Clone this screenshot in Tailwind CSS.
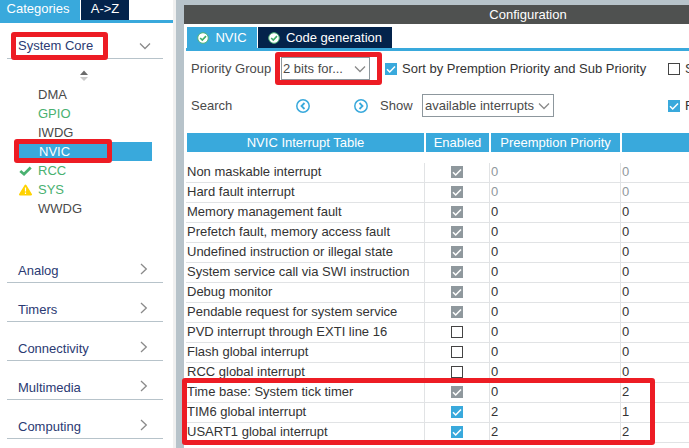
<!DOCTYPE html>
<html lang="en">
<head>
<meta charset="utf-8">
<meta name="viewport" content="width=device-width, initial-scale=1">
<title>NVIC Configuration</title>
<script src="https://cdn.jsdelivr.net/npm/@tailwindcss/browser@4"></script>
</head>
<body class="flex h-screen overflow-hidden bg-white font-['Liberation_Sans',Arial,sans-serif] text-[13px] leading-4 text-[#4a4a4a]">

<svg class="hidden">
  <symbol id="tick" viewBox="0 0 12 12"><path d="M2 6.3 4.7 9 10 3.4" fill="none" stroke="currentColor" stroke-width="1.5"/></symbol>
  <symbol id="right" viewBox="0 0 8 12"><path d="M1 1 6.300 6 1 11" fill="none" stroke="currentColor" stroke-width="1.300"/></symbol>
  <symbol id="down" viewBox="0 0 12 8"><path d="M1 1.500 6 6.500 11 1.500" fill="none" stroke="currentColor" stroke-width="1.300"/></symbol>
  <symbol id="ok" viewBox="0 0 12 12"><circle cx="6" cy="6" r="5.300" fill="#fff" stroke="#4fb377" stroke-width="1"/><path d="M3.200 6 5.300 8 9 4.200" fill="none" stroke="#3fae6a" stroke-width="1.700"/></symbol>
</svg>

<aside class="w-44 shrink-0 overflow-hidden border-r-[3px] border-[#f0f0f0]">
  <div class="flex gap-px border-b-[3px] border-[#39a9dc] text-white">
    <button class="h-5 w-20 bg-[#39a9dc] pr-1 pb-0.5">Categories</button>
    <button class="h-5 w-12 bg-[#03234b] pb-0.5">A-&gt;Z</button>
  </div>

  <div class="relative mt-3 mr-2.5 ml-[7px] flex h-6 items-center justify-between border-b border-[#b7c3ca] pr-3 pb-0.5 pl-[11px] text-[#2b3a73]">
    <button>System Core</button>
    <svg class="h-2 w-3 text-[#8a8a8a]"><use href="#down"/></svg>
    <span class="pointer-events-none absolute -top-[3px] left-1 h-7 w-[97px] rounded-[3px] border-[5px] border-[#ed1c24]"></span>
  </div>

  <svg class="mt-[11px] ml-20 h-3 w-2" viewBox="0 0 8 12"><path d="M0 5 4 .5 8 5Z" fill="#6b6b6b"/><path d="M0 7 4 11 8 7Z" fill="#c8c8c8"/></svg>

  <ul class="mt-[3px] mr-[21px] ml-[15px] leading-[19px]">
    <li class="pl-[23px]">DMA</li>
    <li class="pl-[23px] text-[#49b170]">GPIO</li>
    <li class="pl-[23px]">IWDG</li>
    <li class="relative bg-[#39a9dc] pl-6 text-white">NVIC
      <span class="pointer-events-none absolute -top-[3px] -left-px h-6 w-[98px] rounded-[3px] border-[5px] border-[#ed1c24]"></span>
    </li>
    <li class="flex items-center gap-1.5 pl-1 text-[#49b170]">
      <svg class="h-3 w-[13px]" viewBox="0 0 13 12"><path d="M1.300 6 5 9.200 11.700 2.500" fill="none" stroke="#49b170" stroke-width="2.800"/></svg>RCC</li>
    <li class="flex items-center gap-1.5 pl-1 text-[#49b170]">
      <svg class="h-3 w-[13px]" viewBox="0 0 13 12"><path d="M6.500 1.500 12 10.500H1Z" fill="#ffd200" stroke="#ffd200" stroke-width="2" stroke-linejoin="round"/><path d="M6.500 3.500V7.500M6.500 8.500V10" stroke="#fff" stroke-width="1.200"/></svg>SYS</li>
    <li class="pl-[23px]">WWDG</li>
  </ul>

  <nav class="mt-[26px] mr-2.5 ml-[7px] text-[#2b3a73]">
    <button class="flex h-[39px] w-full items-end justify-between border-b border-[#b7c3ca] pr-[15px] pb-[3px] pl-[11px]">Analog<svg class="mb-1 h-3 w-2 text-[#8a8a8a]"><use href="#right"/></svg></button>
    <button class="flex h-[39px] w-full items-end justify-between border-b border-[#b7c3ca] pr-[15px] pb-[3px] pl-[11px]">Timers<svg class="mb-1 h-3 w-2 text-[#8a8a8a]"><use href="#right"/></svg></button>
    <button class="flex h-[39px] w-full items-end justify-between border-b border-[#b7c3ca] pr-[15px] pb-[3px] pl-[11px]">Connectivity<svg class="mb-1 h-3 w-2 text-[#8a8a8a]"><use href="#right"/></svg></button>
    <button class="flex h-[39px] w-full items-end justify-between border-b border-[#b7c3ca] pr-[15px] pb-[3px] pl-[11px]">Multimedia<svg class="mb-1 h-3 w-2 text-[#8a8a8a]"><use href="#right"/></svg></button>
    <button class="flex h-[39px] w-full items-end justify-between border-b border-[#b7c3ca] pr-[15px] pb-[3px] pl-[11px]">Computing<svg class="mb-1 h-3 w-2 text-[#8a8a8a]"><use href="#right"/></svg></button>
  </nav>
</aside>

<main class="min-w-0 flex-1 border-t-[5px] border-l-8 border-[#b7c3ca]">
  <h1 class="h-[19px] bg-[#4f5150] pt-0.5 pl-[183px] text-center text-white">Configuration</h1>
  <div class="mt-[3px] ml-0.5 flex gap-px border-b-[3px] border-[#39a9dc] pl-px text-white">
    <button class="flex h-[21px] w-[70px] items-center justify-center gap-1.5 bg-[#39a9dc]"><svg class="size-3"><use href="#ok"/></svg>NVIC</button>
    <button class="flex h-[21px] w-[134px] items-center justify-center gap-1.5 bg-[#03234b]"><svg class="size-3"><use href="#ok"/></svg>Code generation</button>
  </div>

  <div class="mt-1.5 flex h-[23px] items-center whitespace-nowrap pl-[7px]">
    <label for="group" class="w-[90px] shrink-0">Priority Group</label>
    <div class="relative h-[23px] w-[89px] shrink-0">
      <select id="group" class="h-full w-full appearance-none border border-[#8d979d] bg-white pl-px"><option>2 bits for...</option></select>
      <svg class="pointer-events-none absolute top-2 right-1 h-2 w-3 text-[#8a8a8a]"><use href="#down"/></svg>
      <span class="pointer-events-none absolute -top-[5px] -left-1.5 h-[33px] w-[107px] rounded-[3px] border-[5px] border-[#ed1c24]"></span>
    </div>
    <label class="ml-[15px] flex w-[283px] shrink-0 items-center gap-[5px] text-[#333]">
      <span class="grid size-3 text-white"><input type="checkbox" checked class="col-start-1 row-start-1 size-3 appearance-none border border-[#39a9dc] bg-[#39a9dc]"><svg class="pointer-events-none col-start-1 row-start-1 size-3"><use href="#tick"/></svg></span>Sort by Premption Priority and Sub Priority</label>
    <label class="flex items-center gap-[5px] text-[#333]"><input type="checkbox" class="size-3 appearance-none border border-[#444] bg-white">S</label>
  </div>

  <div class="mt-3.5 flex h-[23px] items-center whitespace-nowrap pl-[7px]">
    <span class="w-[105px] shrink-0">Search</span>
    <button aria-label="Previous" class="mr-[44px]"><svg class="size-3.5" viewBox="0 0 14 14" fill="none" stroke="#39a9dc"><circle cx="7" cy="7" r="6.200" stroke-width="1.500"/><path d="M8.500 4 5.500 7 8.500 10" stroke-width="1.800"/></svg></button>
    <button aria-label="Next" class="mr-3"><svg class="size-3.5" viewBox="0 0 14 14" fill="none" stroke="#39a9dc"><circle cx="7" cy="7" r="6.200" stroke-width="1.500"/><path d="M5.500 4 8.500 7 5.500 10" stroke-width="1.800"/></svg></button>
    <label for="show" class="w-[42px] shrink-0">Show</label>
    <div class="relative h-[23px] w-[132px] shrink-0">
      <select id="show" class="h-full w-full appearance-none border border-[#8d979d] bg-white pl-0.5"><option>available interrupts</option></select>
      <svg class="pointer-events-none absolute top-2 right-1 h-2 w-3 text-[#8a8a8a]"><use href="#down"/></svg>
    </div>
    <label class="ml-[114px] flex items-center gap-[5px] text-[#333]"><span class="grid size-3 text-white"><input type="checkbox" checked class="col-start-1 row-start-1 size-3 appearance-none border border-[#39a9dc] bg-[#39a9dc]"><svg class="pointer-events-none col-start-1 row-start-1 size-3"><use href="#tick"/></svg></span>F</label>
  </div>

  <div class="relative mt-4 ml-0.5">
    <table class="w-full table-fixed border-separate border-spacing-0 text-[#333]">
      <colgroup><col class="w-[239px]"><col class="w-[65px]"><col class="w-[131px]"><col></colgroup>
      <thead>
        <tr class="text-white">
          <th class="h-[30px] border-x border-b-[11px] border-white bg-[#39a9dc] p-0 font-normal">NVIC Interrupt Table</th>
          <th class="h-[30px] border-x border-b-[11px] border-white bg-[#39a9dc] p-0 font-normal">Enabled</th>
          <th class="h-[30px] border-x border-b-[11px] border-white bg-[#39a9dc] p-0 font-normal">Preemption Priority</th>
          <th aria-label="Sub Priority" class="h-[30px] border-b-[11px] border-l border-white bg-[#39a9dc] p-0 font-normal"></th>
        </tr>
      </thead>
      <tbody id="rows"></tbody>
    </table>
    <span class="pointer-events-none absolute -bottom-0.5 -left-1 h-[67px] w-[473px] rounded-[3px] border-[5px] border-[#ed1c24]"></span>
  </div>
</main>

<script>
  const interrupts = [
    ["Non maskable interrupt", "locked", 0, 0, true],
    ["Hard fault interrupt", "locked", 0, 0, true],
    ["Memory management fault", "locked", 0, 0],
    ["Prefetch fault, memory access fault", "locked", 0, 0],
    ["Undefined instruction or illegal state", "locked", 0, 0],
    ["System service call via SWI instruction", "locked", 0, 0],
    ["Debug monitor", "locked", 0, 0],
    ["Pendable request for system service", "locked", 0, 0],
    ["PVD interrupt through EXTI line 16", "off", 0, 0],
    ["Flash global interrupt", "off", 0, 0],
    ["RCC global interrupt", "off", 0, 0],
    ["Time base: System tick timer", "locked", 0, 2],
    ["TIM6 global interrupt", "on", 2, 1],
    ["USART1 global interrupt", "on", 2, 2]
  ];
  const boxes = {
    locked: "col-start-1 row-start-1 size-3 appearance-none bg-[#8f989d]",
    on: "col-start-1 row-start-1 size-3 appearance-none bg-[#39a9dc]",
    off: "col-start-1 row-start-1 size-3 appearance-none border border-[#444] bg-white"
  };
  document.getElementById("rows").innerHTML = interrupts.map(([name, state, pre, sub, fixed]) => `
    <tr>
      <td class="h-5 border-r border-b border-[#e1e3e5] p-0 pb-px pl-px whitespace-nowrap">${name}</td>
      <td class="h-5 border-r border-b border-[#e1e3e5] p-0 pb-px"><span class="mx-auto grid size-3 text-white"><input type="checkbox" aria-label="${name}" class="${boxes[state]}" ${state !== "off" ? "checked" : ""} ${state === "locked" ? "disabled" : ""}>${state !== "off" ? '<svg class="pointer-events-none col-start-1 row-start-1 size-3"><use href="#tick"/></svg>' : ""}</span></td>
      <td class="h-5 border-r border-b border-[#e1e3e5] p-0 pb-px pl-px ${fixed ? "text-[#8f989d]" : ""}">${pre}</td>
      <td class="h-5 border-b border-[#e1e3e5] p-0 pb-px pl-px ${fixed ? "text-[#8f989d]" : ""}">${sub}</td>
    </tr>`).join("");
</script>
</body>
</html>
